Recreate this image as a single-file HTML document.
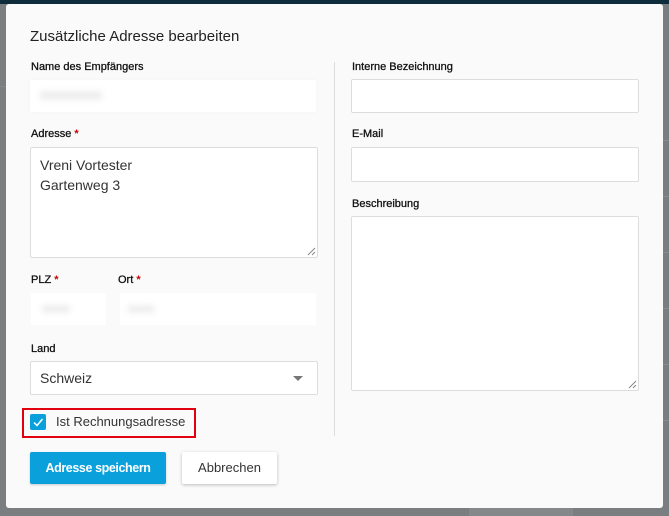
<!DOCTYPE html>
<html><head><style>
body{margin:0;width:669px;height:516px;overflow:hidden;background:#7b7e81;font-family:"Liberation Sans",sans-serif;position:relative}
.top{position:absolute;left:0;top:0;width:669px;height:4px;background:#0e2c3b}
.m{position:absolute;left:6px;top:4px;width:657px;height:504px;background:#fafafa;border-radius:3px}
.a{position:absolute}
.lbl{position:absolute;font-size:11px;color:#111;-webkit-text-stroke:0.3px #111;top:0}
.lbl b{color:#c00;-webkit-text-stroke:0}
.inp{position:absolute;background:#fff;border:1px solid #ddd;border-radius:2px;box-sizing:border-box}
.t{position:absolute;font-size:14px;color:#333}
</style></head><body>
<div class="top"></div>
<div class="a" style="left:0;top:86px;width:6px;height:1px;background:#888"></div>
<div class="a" style="left:663px;top:140px;width:6px;height:1px;background:#8a8d90"></div>
<div class="a" style="left:663px;top:196px;width:6px;height:1px;background:#8a8d90"></div>
<div class="a" style="left:663px;top:252px;width:6px;height:1px;background:#8a8d90"></div>
<div class="a" style="left:663px;top:308px;width:6px;height:1px;background:#8a8d90"></div>
<div class="a" style="left:663px;top:364px;width:6px;height:1px;background:#8a8d90"></div>
<div class="a" style="left:663px;top:420px;width:6px;height:1px;background:#8a8d90"></div>
<div class="a" style="left:469px;top:508px;width:104px;height:8px;background:#85888b"></div>
<div class="m"></div>
<div class="t" style="left:30px;top:28px;font-size:15px;color:#222">Zusätzliche Adresse bearbeiten</div>
<div class="a" style="left:334px;top:62px;width:1px;height:374px;background:#ddd"></div>

<div class="lbl" style="left:31px;top:61px">Name des Empfängers</div>
<div class="a" style="left:30px;top:80px;width:286px;height:32px;background:#fff;box-shadow:0 0 4px #f3f3f3"></div>
<div class="a" style="left:40px;top:91px;width:62px;height:9px;background:#eee;filter:blur(3px)"></div>

<div class="lbl" style="left:31px;top:128px">Adresse<b> *</b></div>
<div class="inp" style="left:30px;top:147px;width:288px;height:111px"></div>
<div class="t" style="left:40px;top:155px;line-height:20px">Vreni Vortester<br>Gartenweg 3</div>

<div class="lbl" style="left:31px;top:274px">PLZ<b> *</b></div>
<div class="lbl" style="left:118px;top:274px">Ort<b> *</b></div>
<div class="a" style="left:31px;top:293px;width:75px;height:32px;background:#fff"></div>
<div class="a" style="left:42px;top:305px;width:28px;height:8px;background:#eee;filter:blur(3px)"></div>
<div class="a" style="left:120px;top:293px;width:196px;height:32px;background:#fff"></div>
<div class="a" style="left:128px;top:305px;width:26px;height:8px;background:#eee;filter:blur(3px)"></div>

<div class="lbl" style="left:31px;top:343px">Land</div>
<div class="inp" style="left:30px;top:361px;width:288px;height:34px"></div>
<div class="t" style="left:40px;top:370px">Schweiz</div>
<div class="a" style="left:293px;top:376px;width:0;height:0;border-left:5px solid transparent;border-right:5px solid transparent;border-top:5px solid #777"></div>

<div class="a" style="left:22px;top:408px;width:170px;height:26px;border:2px solid #e0000e"></div>
<div class="a" style="left:30px;top:414px;width:16px;height:16px;background:#0aa0dc;border-radius:2px"></div>
<svg class="a" style="left:30px;top:414px" width="16" height="16"><path d="M4 8.5l3 3 5.5-6.5" stroke="#fff" stroke-width="1.5" fill="none"/></svg>
<div class="t" style="left:56px;top:414px;font-size:13px">Ist Rechnungsadresse</div>

<div class="a" style="left:30px;top:452px;width:136px;height:32px;background:#0aa0dc;border-radius:2px;box-shadow:0 1px 2px rgba(0,0,0,.2);color:#fff;font-size:12.5px;font-weight:bold;text-align:center;line-height:32px;letter-spacing:-0.4px">Adresse speichern</div>
<div class="a" style="left:182px;top:452px;width:95px;height:32px;background:#fff;border-radius:2px;box-shadow:0 1px 3px rgba(0,0,0,.25);color:#333;font-size:13px;text-align:center;line-height:32px">Abbrechen</div>

<div class="lbl" style="left:352px;top:61px">Interne Bezeichnung</div>
<div class="inp" style="left:351px;top:79px;width:288px;height:34px"></div>
<div class="lbl" style="left:352px;top:128px">E-Mail</div>
<div class="inp" style="left:351px;top:147px;width:288px;height:35px"></div>
<div class="lbl" style="left:352px;top:198px">Beschreibung</div>
<div class="inp" style="left:351px;top:216px;width:288px;height:175px"></div>
<svg class="a" style="left:628px;top:380px" width="9" height="9"><path d="M8 1L1 8M8 5L5 8" stroke="#888" stroke-width="1"/></svg>
<svg class="a" style="left:307px;top:247px" width="9" height="9"><path d="M8 1L1 8M8 5L5 8" stroke="#888" stroke-width="1"/></svg>
</body></html>
